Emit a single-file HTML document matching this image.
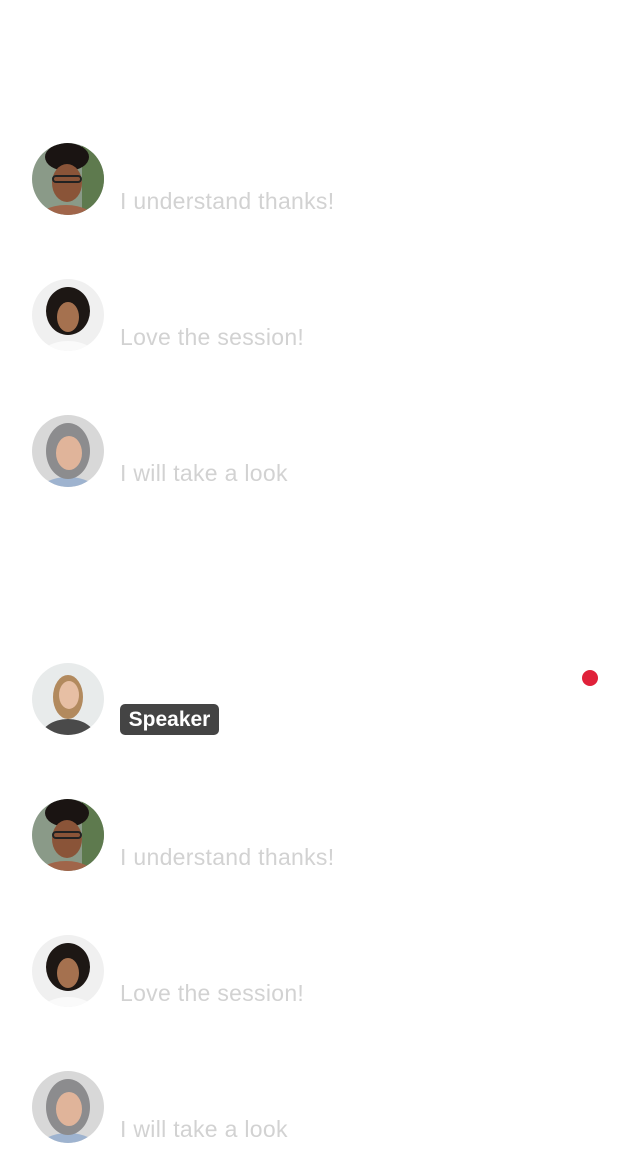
<!DOCTYPE html>
<html><head><meta charset="utf-8"><style>
body{margin:0;width:638px;height:1174px;background:#fff;position:relative;overflow:hidden;font-family:"Liberation Sans",sans-serif}
.av{position:absolute;left:32px;width:72px;height:72px;border-radius:50%;overflow:hidden}
.t{position:absolute;left:120px;font-size:23px;color:#d2d2d2;line-height:26px;letter-spacing:0.3px}
.badge{position:absolute;left:120px;top:704px;width:99px;height:31px;background:#444;border-radius:5px;color:#fff;font-weight:bold;font-size:21px;line-height:31px;text-align:center}
.dot{position:absolute;left:582px;top:670px;width:16px;height:16px;border-radius:50%;background:#e0213a}
</style></head><body>
<svg width="0" height="0" style="position:absolute">
<defs>
<symbol id="a1" viewBox="0 0 72 72"><rect width="72" height="72" fill="#8a9a88"/><rect x="50" width="22" height="72" fill="#5e7a4e"/><ellipse cx="34" cy="78" rx="30" ry="16" fill="#a0654a"/><ellipse cx="35" cy="14" rx="22" ry="14" fill="#1a1412"/><ellipse cx="35" cy="40" rx="15" ry="19" fill="#8a5438"/><rect x="21" y="33" width="28" height="6" rx="3" fill="none" stroke="#222" stroke-width="2"/></symbol>
<symbol id="a2" viewBox="0 0 72 72"><rect width="72" height="72" fill="#f0f0f0"/><ellipse cx="36" cy="78" rx="28" ry="16" fill="#fafafa"/><ellipse cx="36" cy="32" rx="22" ry="24" fill="#1d1714"/><ellipse cx="36" cy="38" rx="11" ry="15" fill="#a5714f"/></symbol>
<symbol id="a3" viewBox="0 0 72 72"><rect width="72" height="72" fill="#d8d8d8"/><ellipse cx="36" cy="78" rx="30" ry="16" fill="#9eb3cf"/><ellipse cx="36" cy="36" rx="22" ry="28" fill="#8c8c8e"/><ellipse cx="37" cy="38" rx="13" ry="17" fill="#e0b49a"/></symbol>
<symbol id="a4" viewBox="0 0 72 72"><rect width="72" height="72" fill="#e8ebeb"/><ellipse cx="36" cy="76" rx="28" ry="20" fill="#4a4a4a"/><ellipse cx="36" cy="34" rx="15" ry="22" fill="#b28a5e"/><ellipse cx="37" cy="32" rx="10" ry="14" fill="#e7bfa4"/></symbol>
</defs></svg>
<div class="av" style="top:143px"><svg width="72" height="72"><use href="#a1"/></svg></div>
<div class="t" style="top:188px">I understand thanks!</div>
<div class="av" style="top:279px"><svg width="72" height="72"><use href="#a2"/></svg></div>
<div class="t" style="top:324px">Love the session!</div>
<div class="av" style="top:415px"><svg width="72" height="72"><use href="#a3"/></svg></div>
<div class="t" style="top:460px">I will take a look</div>
<div class="av" style="top:663px"><svg width="72" height="72"><use href="#a4"/></svg></div>
<div class="badge">Speaker</div>
<div class="dot"></div>
<div class="av" style="top:799px"><svg width="72" height="72"><use href="#a1"/></svg></div>
<div class="t" style="top:844px">I understand thanks!</div>
<div class="av" style="top:935px"><svg width="72" height="72"><use href="#a2"/></svg></div>
<div class="t" style="top:980px">Love the session!</div>
<div class="av" style="top:1071px"><svg width="72" height="72"><use href="#a3"/></svg></div>
<div class="t" style="top:1116px">I will take a look</div>
</body></html>
